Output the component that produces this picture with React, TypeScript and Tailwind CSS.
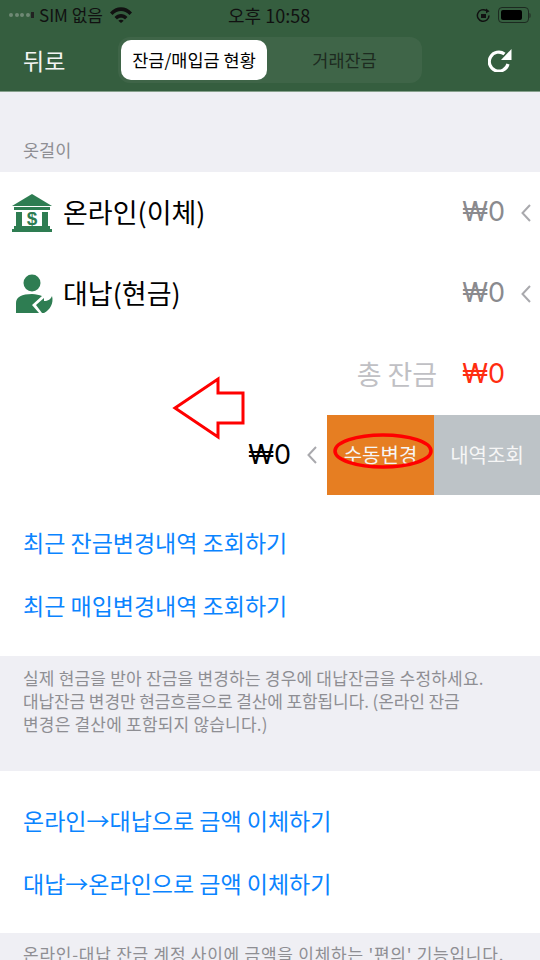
import React from 'react';

const KR = { fontFamily: '"Noto Sans CJK KR", "Noto Sans", sans-serif' };

const BankIcon = () => (
  <svg width="42" height="40" viewBox="0 0 42 40" fill="#2e7d52">
    <path d="M21 1 L41 13 L1 13 Z" />
    <rect x="3" y="14" width="36" height="3" />
    <rect x="5" y="19" width="6" height="14" />
    <rect x="31" y="19" width="6" height="14" />
    <rect x="3" y="33" width="36" height="3" />
    <rect x="1" y="36" width="40" height="3" />
    <text x="21" y="32" textAnchor="middle" fontSize="19" fontWeight="700" fill="#2e7d52" fontFamily="Liberation Sans, sans-serif">$</text>
  </svg>
);

const PersonIcon = () => (
  <svg className="translate-x-[3px]" width="38" height="40" viewBox="0 0 38 40" fill="#2e7d52">
    <circle cx="16" cy="9" r="8.5" />
    <path d="M0 39 V29 C0 23 6 20 16 20 C20 20 23 21 26 22 L16 31 L23 39 Z" />
    <path d="M20 31 L28 24 L28 27 C32 27 35 25 36 22 C38 29 34 36 28 39 L26 39 Z" />
  </svg>
);

const Chevron = ({ className }: { className: string }) => (
  <svg className={className} width="10" height="18" viewBox="0 0 10 18" fill="none" stroke="#a9a9ad" strokeWidth="2">
    <path d="M9 1 L1.5 9 L9 17" />
  </svg>
);

const Won = ({ className }: { className: string }) => (
  <span className={`font-['Inter'] text-[27px] ${className}`}>₩0</span>
);

const Row = ({ icon, label }: { icon: React.ReactNode; label: string }) => (
  <div className="h-[81px] flex items-center pl-[11px] pr-[9px]">
    <div className="w-[42px] flex justify-center">{icon}</div>
    <span className="ml-[10px] text-[27px] text-black flex-1">{label}</span>
    <Won className="text-[#8a8a8e]" />
    <Chevron className="ml-[16px]" />
  </div>
);

const BlueLink = ({ children }: { children: React.ReactNode }) => (
  <div className="h-[63.5px] flex items-center pl-[23px] text-[23px] text-[#0a84ff]">{children}</div>
);

export default function App() {
  return (
    <div className="relative w-[540px] h-[960px] overflow-hidden bg-[#efeff4]" style={KR}>
      {/* status + nav bar */}
      <div className="h-[92px] bg-[#355e3f] border-b border-[#86a08c]">
        <div className="relative h-[30px] flex items-center justify-between pl-[9px] pr-[9px] text-[#111]">
          <div className="flex items-center">
            <div className="flex items-center gap-[1.5px]">
              <i className="w-[4px] h-[4px] rounded-full bg-[#6f8a75]" />
              <i className="w-[4px] h-[4px] rounded-full bg-[#6f8a75]" />
              <i className="w-[4px] h-[4px] rounded-full bg-[#6f8a75]" />
              <i className="w-[4px] h-[4px] rounded-full bg-[#6f8a75]" />
              <i className="w-[3px] h-[6px] bg-[#222]" />
            </div>
            <span className="ml-[5px] text-[17px]">SIM 없음</span>
            <svg className="ml-[7px]" width="22" height="16" viewBox="0 0 22 16" fill="#111">
              <path d="M0 5.5 C6 -1.5 16 -1.5 22 5.5 L19.5 8 C14.5 2.5 7.5 2.5 2.5 8 Z" />
              <path d="M4.5 10 C8 6 14 6 17.5 10 L15 12.5 C13 10 9 10 7 12.5 Z" />
              <path d="M8.3 13.7 C9.8 12.3 12.2 12.3 13.7 13.7 L11 16 Z" />
            </svg>
          </div>
          <span className="absolute left-[228px] text-[18px]">오후 10:58</span>
          <div className="flex items-center">
            <svg width="15" height="15" viewBox="0 0 15 15" fill="none" stroke="#111" strokeWidth="1.5">
              <path d="M13 7.5 A5.8 5.8 0 1 1 10.5 2.7" />
              <path d="M10 0.5 L13.5 3.2 L10 5.2 Z" fill="#111" stroke="none" />
              <rect x="5" y="6" width="5" height="4" fill="#111" stroke="none" />
            </svg>
            <div className="ml-[7px] w-[31px] h-[16px] rounded-[4px] border border-[#1c2a20] p-[2px]">
              <div className="w-[21px] h-full rounded-[2px] bg-black" />
            </div>
            <div className="w-[2px] h-[5px] bg-[#2a3f2f] rounded-r-sm" />
          </div>
        </div>
        <div className="relative h-[61px] flex items-start">
          <span className="ml-[23px] mt-[13px] text-[23px] text-[#f4f4f4]">뒤로</span>
          <div className="absolute left-[118px] top-[7px] w-[304px] h-[46px] rounded-[12px] bg-[#3f6548] flex items-center">
            <div className="ml-[3px] w-[146px] h-[40px] rounded-[10px] bg-white flex items-center justify-center text-[17.5px] text-black">잔금/매입금 현황</div>
            <div className="flex-1 text-center text-[17.5px] text-[#1d2b20]">거래잔금</div>
          </div>
          <svg className="absolute left-[488px] top-[19px]" width="24" height="23" viewBox="0 0 24 23" fill="none" stroke="#fff" strokeWidth="3.2">
            <path d="M20 15 A9.5 9.5 0 1 1 16.5 5" />
            <path d="M23.5 0 L23.5 11 L13 11 Z" fill="#fff" stroke="none" />
          </svg>
        </div>
      </div>

      <div className="h-[80px] flex items-end pl-[23px] pb-[9px] text-[17.5px] text-[#8e8e93]">옷걸이</div>

      <div className="bg-white h-[484px] overflow-hidden">
        <Row icon={<BankIcon />} label="온라인(이체)" />
        <Row icon={<PersonIcon />} label="대납(현금)" />
        <div className="h-[81px] flex items-center justify-end pr-[35px]">
          <span className="text-[27px] text-[#c0c0c4]">총 잔금</span>
          <Won className="ml-[25px] text-[#ff2d10]" />
        </div>
        <div className="h-[80px] flex items-center justify-end">
          <Won className="text-black" />
          <Chevron className="ml-[16px] mr-[10px]" />
          <div className="w-[107px] h-full bg-[#e67e22] flex items-center justify-center text-[20px] text-[#f6f6f6]">수동변경</div>
          <div className="w-[106px] h-full bg-[#bdc3c7] flex items-center justify-center text-[20px] text-[#f6f6f6]">내역조회</div>
        </div>
        <div className="h-[15px]" />
        <BlueLink>최근 잔금변경내역 조회하기</BlueLink>
        <BlueLink>최근 매입변경내역 조회하기</BlueLink>
      </div>

      <div className="h-[115px] pl-[23px] pr-[16px] pt-[10px] text-[17px] leading-[23px] text-[#8e8e93]">
        <p className="tracking-[0.2px]">실제 현금을 받아 잔금을 변경하는 경우에 대납잔금을 수정하세요.</p>
        <p className="tracking-[-0.1px]">대납잔금 변경만 현금흐름으로 결산에 포함됩니다. (온라인 잔금</p>
        <p className="tracking-[0.2px]">변경은 결산에 포함되지 않습니다.)</p>
      </div>

      <div className="bg-white h-[162px] pt-[17px]">
        <BlueLink>온라인→대납으로 금액 이체하기</BlueLink>
        <BlueLink>대납→온라인으로 금액 이체하기</BlueLink>
      </div>

      <div className="pl-[23px] pt-[9px] text-[17px] leading-[23px] tracking-[0.75px] text-[#8e8e93] whitespace-nowrap">온라인-대납 잔금 계정 사이에 금액을 이체하는 '편의' 기능입니다.</div>

      {/* red annotations over the screenshot */}
      <svg className="absolute left-[170px] top-[376px]" width="78" height="64" viewBox="0 0 78 64" fill="#fff" stroke="#f00" strokeWidth="3">
        <path d="M5 32 L48 3 L48 17 L73 17 L73 47 L48 47 L48 61 Z" />
      </svg>
      <svg className="absolute left-[332px] top-[432px]" width="102" height="38" viewBox="0 0 102 38" fill="none" stroke="#f00" strokeWidth="3.5">
        <ellipse cx="51" cy="19" rx="48" ry="16" />
      </svg>
    </div>
  );
}
